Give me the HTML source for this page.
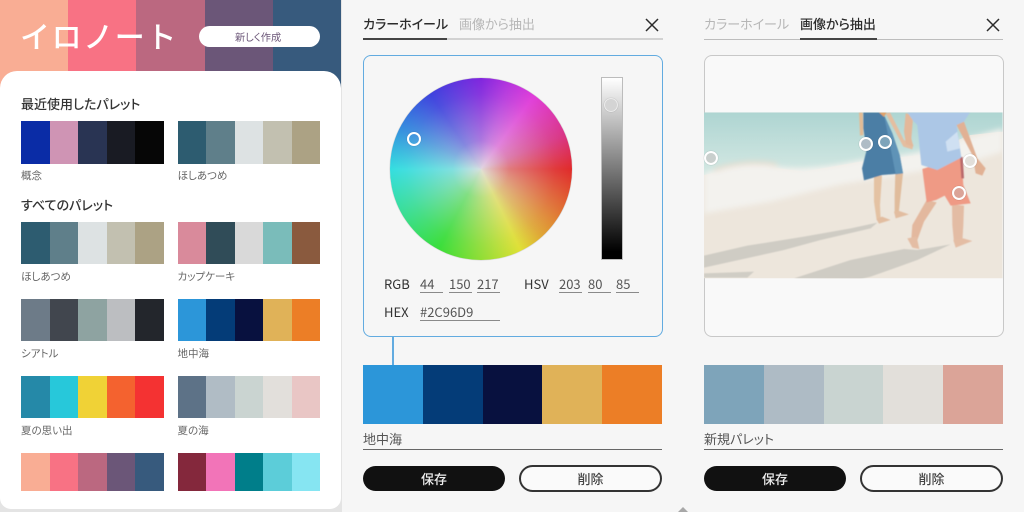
<!DOCTYPE html>
<html lang="ja">
<head>
<meta charset="utf-8">
<title>イロノート</title>
<style>
*{box-sizing:border-box;margin:0;padding:0}
html,body{width:1024px;height:512px;overflow:hidden;background:#f6f6f6}
body{position:relative;font-family:"Liberation Sans","Noto Sans CJK JP",sans-serif;color:#333}
#w{position:absolute;left:0;top:0;width:1024px;height:512px;background:#f6f6f6;filter:blur(.35px)}
.a{position:absolute}
.t{position:absolute;white-space:nowrap;line-height:1;font-family:"Noto Sans CJK JP","Liberation Sans",sans-serif;font-feature-settings:"palt"}
.pal{position:absolute;display:flex}
.pal i{display:block;flex:1 1 0;height:100%}
.h{font-size:13px;font-weight:500;color:#333;left:21px}
.l{font-size:10.5px;color:#666}
.tab{font-size:13px;top:17px;font-weight:500}
.on{color:#2b2b2b}
.off{color:#b6b6b6;font-weight:400}
.f{font-size:13px;color:#333;top:276.5px}
.v{font-size:13px;color:#555;top:276.5px}
.u{position:absolute;height:1px;background:#8a8a8a}
.k{position:absolute;width:14px;height:14px;border-radius:50%;border:2px solid #fff;box-shadow:0 0 1px rgba(0,0,0,.3)}
.btn{position:absolute;display:flex;align-items:center;justify-content:center;font-family:"Noto Sans CJK JP",sans-serif;font-size:13px;font-weight:500;border-radius:14px}
</style>
</head>
<body>
<div id="w">

<!-- Panel 1 -->
<div class="a" style="left:0;top:0;width:342px;height:512px;background:#e4e4e4"></div>
<div class="pal" style="left:0;top:0;width:341px;height:120px">
<i style="background:#f9ad94"></i><i style="background:#f87284"></i><i style="background:#bb6880"></i><i style="background:#6b5678"></i><i style="background:#375a7d"></i>
</div>
<div class="a" style="left:0;top:71px;width:341px;height:438px;background:#fff;border-radius:17px 17px 11px 11px"></div>
<div class="t" style="left:20px;top:20px;font-size:30px;font-weight:500;color:#fff;letter-spacing:1.6px;font-feature-settings:normal">イロノート</div>
<div class="a" style="left:199px;top:25.5px;width:121px;height:21px;border-radius:11px;background:#fff"></div>
<div class="t" style="left:235px;top:32px;font-size:10.2px;color:#6b5678">新しく作成</div>

<div class="t h" style="top:97px">最近使用したパレット</div>
<div class="pal" style="left:21px;top:121px;width:142.5px;height:42.5px"><i style="background:#0a2ca6"></i><i style="background:#cf94b4"></i><i style="background:#293453"></i><i style="background:#191b23"></i><i style="background:#060606"></i></div>
<div class="pal" style="left:177.5px;top:121px;width:142.5px;height:42.5px"><i style="background:#2d5c70"></i><i style="background:#5f7f8a"></i><i style="background:#dde2e3"></i><i style="background:#c2c0b0"></i><i style="background:#aca284"></i></div>
<div class="t l" style="left:21px;top:171px">概念</div>
<div class="t l" style="left:177.5px;top:171px">ほしあつめ</div>

<div class="t h" style="top:198px">すべてのパレット</div>
<div class="pal" style="left:21px;top:222px;width:142.5px;height:42px"><i style="background:#2d5c70"></i><i style="background:#5f7f8a"></i><i style="background:#dde2e3"></i><i style="background:#c2c0b0"></i><i style="background:#aca284"></i></div>
<div class="pal" style="left:177.5px;top:222px;width:142.5px;height:42px"><i style="background:#d98a9b"></i><i style="background:#304c58"></i><i style="background:#d9d9d9"></i><i style="background:#7abcba"></i><i style="background:#8a5a3e"></i></div>
<div class="t l" style="left:21px;top:272px">ほしあつめ</div>
<div class="t l" style="left:177.5px;top:272px">カップケーキ</div>

<div class="pal" style="left:21px;top:298.5px;width:142.5px;height:42.5px"><i style="background:#6d7b88"></i><i style="background:#41464e"></i><i style="background:#8ea3a1"></i><i style="background:#bcbec1"></i><i style="background:#23262c"></i></div>
<div class="pal" style="left:177.5px;top:298.5px;width:142.5px;height:42.5px"><i style="background:#2c96d9"></i><i style="background:#043c78"></i><i style="background:#08113f"></i><i style="background:#e0b258"></i><i style="background:#ec7e26"></i></div>
<div class="t l" style="left:21px;top:349px">シアトル</div>
<div class="t l" style="left:177.5px;top:349px">地中海</div>

<div class="pal" style="left:21px;top:375.5px;width:142.5px;height:42.5px"><i style="background:#2589a8"></i><i style="background:#27c8da"></i><i style="background:#f0d236"></i><i style="background:#f4622f"></i><i style="background:#f43232"></i></div>
<div class="pal" style="left:177.5px;top:375.5px;width:142.5px;height:42.5px"><i style="background:#5d7287"></i><i style="background:#b0bcc5"></i><i style="background:#cad4d1"></i><i style="background:#e2dfdb"></i><i style="background:#e9c6c5"></i></div>
<div class="t l" style="left:21px;top:426px">夏の思い出</div>
<div class="t l" style="left:177.5px;top:426px">夏の海</div>

<div class="pal" style="left:21px;top:452.5px;width:142.5px;height:38px"><i style="background:#f9ad94"></i><i style="background:#f87284"></i><i style="background:#bb6880"></i><i style="background:#6b5678"></i><i style="background:#375a7d"></i></div>
<div class="pal" style="left:177.5px;top:452.5px;width:142.5px;height:38px"><i style="background:#84283c"></i><i style="background:#f274b8"></i><i style="background:#007e8a"></i><i style="background:#5ccdd9"></i><i style="background:#86e5f2"></i></div>

<!-- Panel 2 -->
<div class="t tab on" style="left:363px">カラーホイール</div>
<div class="t tab off" style="left:459px">画像から抽出</div>
<div class="a" style="left:362.5px;top:38px;width:300px;height:1.5px;background:#d2d2d2"></div>
<div class="a" style="left:362.5px;top:37.5px;width:84.5px;height:2px;background:#444"></div>
<svg class="a" style="left:644px;top:17px" width="16" height="16" viewBox="0 0 16 16"><path d="M2 2L14 14M14 2L2 14" stroke="#2b2b2b" stroke-width="1.5" fill="none"/></svg>

<div class="a" style="left:362.5px;top:54.5px;width:300px;height:282px;border:1.5px solid #62abe0;border-radius:8px"></div>
<div class="a" style="left:390px;top:77.5px;width:182px;height:182px;border-radius:50%;box-shadow:0 0 1px #888;background:conic-gradient(from 0deg,#7510dd 0deg,#b020dd 18deg,#e02ad8 36deg,#d8207a 68deg,#e01515 90deg,#e0651f 118deg,#dfa020 138deg,#dfe020 154deg,#80dd20 182deg,#25dd25 208deg,#25dd90 242deg,#20dde0 270deg,#2080dd 298deg,#2a30dd 326deg,#7510dd 360deg)"></div>
<div class="a" style="left:390px;top:77.5px;width:182px;height:182px;border-radius:50%;background:radial-gradient(circle,rgba(225,225,225,.95) 0%,rgba(225,225,225,.5) 22%,rgba(225,225,225,.18) 58%,rgba(225,225,225,0) 88%)"></div>
<div class="k" style="left:407px;top:132px;background:transparent"></div>
<div class="a" style="left:600.5px;top:77px;width:22px;height:183px;border:1px solid #bcbcbc;background:linear-gradient(#fff,#000 96%)"></div>
<div class="k" style="left:604px;top:97.5px;background:#d4d4d4;border-color:#ececec;border-width:1.5px"></div>

<div class="t f" style="left:384px">RGB</div>
<div class="t v" style="left:420px">44</div>
<div class="t v" style="left:449px">150</div>
<div class="t v" style="left:477px">217</div>
<div class="u" style="left:420px;top:292px;width:23px"></div>
<div class="u" style="left:449px;top:292px;width:23px"></div>
<div class="u" style="left:477px;top:292px;width:23px"></div>
<div class="t f" style="left:524px">HSV</div>
<div class="t v" style="left:559px">203</div>
<div class="t v" style="left:588px">80</div>
<div class="t v" style="left:616px">85</div>
<div class="u" style="left:559px;top:292px;width:23px"></div>
<div class="u" style="left:588px;top:292px;width:23px"></div>
<div class="u" style="left:616px;top:292px;width:23px"></div>
<div class="t f" style="left:384px;top:304.5px">HEX</div>
<div class="t v" style="left:420px;top:304.5px">#2C96D9</div>
<div class="u" style="left:420px;top:320px;width:80px"></div>

<div class="a" style="left:392px;top:336px;width:2px;height:29px;background:#62abe0"></div>
<div class="pal" style="left:363px;top:364.5px;width:299px;height:59.5px"><i style="background:#2c96d9"></i><i style="background:#043c78"></i><i style="background:#08113f"></i><i style="background:#e0b258"></i><i style="background:#ec7e26"></i></div>
<div class="t" style="left:363px;top:432px;font-size:13px;color:#555">地中海</div>
<div class="a" style="left:363px;top:448.5px;width:299px;height:1px;background:#666"></div>
<div class="btn" style="left:363px;top:465.5px;width:142px;height:25.5px;background:#111;color:#eee">保存</div>
<div class="btn" style="left:519px;top:465px;width:143px;height:27px;border:2px solid #333;color:#444;background:#fafafa">削除</div>

<!-- Panel 3 -->
<div class="t tab off" style="left:704px">カラーホイール</div>
<div class="t tab on" style="left:800px">画像から抽出</div>
<div class="a" style="left:704px;top:38.5px;width:299px;height:1px;background:#bdbdbd"></div>
<div class="a" style="left:800px;top:37.5px;width:77px;height:2px;background:#444"></div>
<svg class="a" style="left:985px;top:17px" width="16" height="16" viewBox="0 0 16 16"><path d="M2 2L14 14M14 2L2 14" stroke="#2b2b2b" stroke-width="1.5" fill="none"/></svg>

<div class="a" style="left:703.5px;top:54.5px;width:300px;height:282px;border:1.2px solid #c8c8c8;border-radius:8px;background:#f9f9f9"></div>

<svg class="a" style="left:704px;top:105px" width="300" height="180" viewBox="0 0 900 540">
<defs>
<linearGradient id="sea" gradientUnits="userSpaceOnUse" x1="0" y1="22" x2="0" y2="200"><stop offset="0" stop-color="#aed5d2"/><stop offset="1" stop-color="#d2e7e2"/></linearGradient>
<filter id="b1" x="-10%" y="-30%" width="120%" height="160%"><feGaussianBlur stdDeviation="8"/></filter>
<filter id="b2" x="-10%" y="-10%" width="120%" height="120%"><feGaussianBlur stdDeviation="1.5"/></filter>
<clipPath id="c"><rect x="0" y="22" width="896" height="498"/></clipPath>
</defs>
<g clip-path="url(#c)">
<rect x="0" y="22" width="896" height="498" fill="#ede6dc"/>
<path d="M0 22H896V80L800 90 650 150 470 170 300 200 150 180 0 210Z" fill="url(#sea)"/>
<g filter="url(#b1)">
<path d="M0 205C60 185 150 170 220 185 300 198 400 180 470 165 560 158 650 145 720 120L896 70V140L800 170 640 200 400 240 200 290 0 325Z" fill="#f3f2ee"/>
<path d="M30 195C80 178 150 165 220 180" stroke="#e6dccd" stroke-width="10" fill="none"/>
</g>
<g filter="url(#b2)">
<!-- shadows -->
<path d="M0 452L130 422 300 395 440 370 520 353 500 370 350 405 240 435 0 488Z" fill="#cfccc4"/>
<path d="M0 505L150 500 130 518 0 518Z" fill="#d0cdc5"/>
<path d="M270 520L440 465 600 432 640 435 740 418 640 465 500 515 470 522Z" fill="#cfccc4"/>
<!-- girl legs -->
<path d="M510 215L534 212 528 300 530 345 518 345 510 290Z" fill="#e4c2a3"/>
<path d="M574 205L597 205 590 270 584 325 572 325 572 270Z" fill="#e0bc9c"/>
<path d="M517 342L534 335 560 345 525 356Z" fill="#e2bda0"/>
<path d="M570 320L586 318 615 328 575 340Z" fill="#e2bda0"/>
<!-- girl arms -->
<path d="M465 22H476L478 90 468 92Z" fill="#e2bb95"/>
<path d="M545 25L558 22 600 105 628 118 625 133 598 125Z" fill="#e4bea0"/>
<!-- girl dress -->
<path d="M478 22H525L540 30 565 85 587 150 597 205 535 210 480 226 474 190 488 135 478 70Z" fill="#4b7ea5"/>
<path d="M540 30L565 85 587 150 597 205 575 208 560 130Z" fill="#5e93b7"/>
<path d="M525 22L548 22 540 36Z" fill="#e2a268"/>
<!-- boy legs -->
<path d="M668 285L698 292 660 350 640 405 622 400 625 360Z" fill="#e3b89e"/>
<path d="M744 298L780 302 778 360 775 412 750 412 745 360Z" fill="#e3bca4"/>
<path d="M610 400L638 395 646 432 625 428Z" fill="#e4bda4"/>
<path d="M748 405L778 400 805 408 755 428Z" fill="#e4bda4"/>
<!-- boy arms -->
<path d="M605 25L628 30 622 100 628 125 606 118 600 80Z" fill="#e3b89a"/>
<path d="M752 50L780 50 820 160 845 190 835 212 815 205 805 150Z" fill="#e1b194"/>
<!-- shorts -->
<path d="M655 192L772 155 778 240 800 295 740 302 722 272 696 285 668 292Z" fill="#ef9a85"/>
<path d="M768 156L776 156 780 220 772 220Z" fill="#b9686a"/>
<!-- shirt -->
<path d="M610 22H798L780 50 758 60 772 158 700 195 652 180 640 60 628 48Z" fill="#acc7e6"/>
<path d="M725 110L760 80 768 130 730 140Z" fill="#cfe0f2"/>
</g>
</g>
</svg>

<div class="k" style="left:704px;top:151px;background:#c9cfcd"></div>
<div class="k" style="left:859px;top:136.5px;background:#afbcc6"></div>
<div class="k" style="left:878px;top:135px;background:#7ea4ba"></div>
<div class="k" style="left:963px;top:154px;background:#e2dfda"></div>
<div class="k" style="left:952px;top:185.5px;background:#dba498"></div>

<div class="pal" style="left:704px;top:364.5px;width:299px;height:59.5px"><i style="background:#7ea4ba"></i><i style="background:#aebbc5"></i><i style="background:#c9d4d1"></i><i style="background:#e2dfda"></i><i style="background:#dba498"></i></div>
<div class="t" style="left:704px;top:432px;font-size:13px;color:#555">新規パレット</div>
<div class="a" style="left:704px;top:448.5px;width:299px;height:1px;background:#666"></div>
<div class="btn" style="left:704px;top:465.5px;width:142px;height:25.5px;background:#111;color:#eee">保存</div>
<div class="btn" style="left:860px;top:465px;width:143px;height:27px;border:2px solid #333;color:#444;background:#fafafa">削除</div>

<div class="a" style="left:678px;top:507px;width:10px;height:5px;background:#a8a8a8;clip-path:polygon(50% 0,100% 100%,0 100%)"></div>
</div>
</body>
</html>
